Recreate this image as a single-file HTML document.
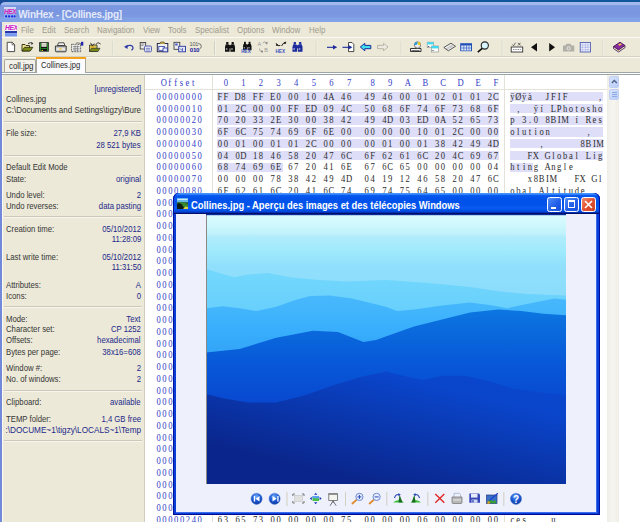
<!DOCTYPE html><html><head><meta charset="utf-8"><style>
*{margin:0;padding:0;box-sizing:border-box}
html,body{width:640px;height:522px;overflow:hidden;background:#fff;position:relative;font-family:"Liberation Sans",sans-serif}
.a{position:absolute}
.mono{font-family:"Liberation Mono",monospace;font-size:9.78px;line-height:11.75px;white-space:pre}
.lp{font-size:9px;line-height:10px;white-space:pre;color:#363636}
.lv{color:#22288a}
.menu{font-size:9px;line-height:10px;color:#9e9b8e;white-space:pre;top:24.9px;transform:scaleX(0.882);transform-origin:0 0}
</style></head><body><div class="a" style="left:0;top:0;width:640px;height:1.6px;background:#10569e"></div><div class="a" style="left:0;top:0;width:8px;height:8px;background:#1a4c9a"></div>
<div class="a" style="left:0;top:1.5px;width:640px;height:21px;background:linear-gradient(#a4baec 0px,#a0b8ec 2.6px,#7b97e0 3.6px,#7a96e0 11.5px,#7c99e1 15px,#82a2e6 16px,#80a2e6 19.8px,#6078d8 20.5px,#6a80d8 21px);border-radius:5px 0 0 0"></div>
<div class="a" style="left:18.2px;top:8.6px;font-size:10px;font-weight:bold;color:#e4eafa;letter-spacing:-0.22px;white-space:pre">WinHex - [Collines.jpg]</div>
<div class="a" style="left:0;top:22px;width:2px;height:500px;background:#7289d9"></div>
<div class="a" style="left:2px;top:22px;width:638px;height:53px;background:#ece9d8"></div>
<div class="a" style="left:2px;top:37px;width:638px;height:1px;background:#fbfaf5"></div>
<div class="a" style="left:2px;top:56px;width:638px;height:1px;background:#d6d2c2"></div>
<div class="a" style="left:2px;top:57px;width:638px;height:1px;background:#fbfaf5"></div>
<div class="a menu" style="left:20.7px">File</div>
<div class="a menu" style="left:41.7px">Edit</div>
<div class="a menu" style="left:63.8px">Search</div>
<div class="a menu" style="left:96.5px">Navigation</div>
<div class="a menu" style="left:143px">View</div>
<div class="a menu" style="left:167.9px">Tools</div>
<div class="a menu" style="left:195.2px">Specialist</div>
<div class="a menu" style="left:236.5px">Options</div>
<div class="a menu" style="left:272px">Window</div>
<div class="a menu" style="left:308.5px">Help</div>
<svg class="a" style="left:0;top:36px" width="640" height="22" viewBox="0 36 640 22"><path d="M7.2,42.3 H12.3 L14.6,44.6 V51.6 H7.2 Z" fill="#fff" stroke="#3a3a3a" stroke-width="0.9"/><path d="M12.1,42.4 V44.8 H14.5" fill="none" stroke="#3a3a3a" stroke-width="0.7"/><path d="M22,44.5 H25 L26,45.5 H29.5 V51 H22 Z" fill="#f3e38f" stroke="#2a2a10" stroke-width="0.9"/><path d="M22,51 L24.5,47.3 H32.8 L30.3,51 Z" fill="#7b8a18" stroke="#2a2a10" stroke-width="0.8"/><path d="M28,43.6 Q30.5,41.8 32.6,43.5 M31.5,42.2 L32.8,43.6 L31.2,44.4" fill="none" stroke="#222" stroke-width="0.9"/><rect x="39.2" y="42.2" width="9.6" height="9.4" fill="#111"/><rect x="39.9" y="42.9" width="1" height="8" fill="#2a9a2a"/><rect x="47.1" y="42.9" width="1" height="8" fill="#2a9a2a"/><rect x="41.4" y="42.9" width="5.2" height="3.9" fill="#e8e8dc"/><rect x="42.2" y="43.6" width="3.6" height="2.5" fill="#cfcfc0"/><rect x="41.3" y="48" width="5.4" height="0.8" fill="#2a9a2a"/><rect x="41.5" y="50" width="1.4" height="1" fill="#d8d020"/><path d="M57.5,45.5 L58.5,42.8 H64 L64.8,45.5 Z" fill="#f4f4f4" stroke="#2a2a2a" stroke-width="0.8"/><path d="M55.4,46 H66.2 V50.8 Q66.2,51.8 65.2,51.8 H56.4 Q55.4,51.8 55.4,50.8 Z" fill="#c8c8c8" stroke="#2a2a2a" stroke-width="0.9"/><rect x="56.5" y="48.4" width="8.5" height="1.3" fill="#fafafa"/><rect x="59.2" y="48.5" width="2.6" height="1" fill="#f0c000"/><rect x="71.6" y="44.3" width="9" height="7.4" fill="#f0f0f0" stroke="#2a2a2a" stroke-width="0.8" stroke-dasharray="1,0.6"/><path d="M73,46.5 H79.5 M73,48.3 H79.5 M73,50 H79.5 M75,45.5 V51 M77.5,45.5 V51" stroke="#6a6a6a" stroke-width="0.6"/><path d="M76,43.2 Q78,42.3 81,43.6" fill="none" stroke="#555" stroke-width="0.7"/><rect x="81" y="41.8" width="2.3" height="3.8" fill="#2424b0"/><path d="M89.5,45 H97 V51.5 H89.5 Z" fill="#d8c850" stroke="#333" stroke-width="0.8"/><path d="M89.5,51.5 L91.5,48.3 H100 L98,51.5 Z" fill="#788a10" stroke="#333" stroke-width="0.7"/><path d="M90.6,42.8 L92.2,46 L94.2,43.5 M95.8,44.5 L98,42.6 L100.6,44" fill="none" stroke="#333" stroke-width="0.9"/><rect x="91.6" y="46" width="2" height="2" fill="#e0a020"/><rect x="112.6" y="41" width="0.8" height="14" fill="#cbc8b8"/><rect x="113.39999999999999" y="41" width="0.6" height="14" fill="#fbfaf6"/><rect x="214.2" y="41" width="0.8" height="14" fill="#cbc8b8"/><rect x="215.0" y="41" width="0.6" height="14" fill="#fbfaf6"/><rect x="315.8" y="41" width="0.8" height="14" fill="#cbc8b8"/><rect x="316.6" y="41" width="0.6" height="14" fill="#fbfaf6"/><rect x="400.8" y="41" width="0.8" height="14" fill="#cbc8b8"/><rect x="401.6" y="41" width="0.6" height="14" fill="#fbfaf6"/><rect x="501.8" y="41" width="0.8" height="14" fill="#cbc8b8"/><rect x="502.6" y="41" width="0.6" height="14" fill="#fbfaf6"/><rect x="602.6" y="41" width="0.8" height="14" fill="#cbc8b8"/><rect x="603.4" y="41" width="0.6" height="14" fill="#fbfaf6"/><path d="M126.5,46.5 Q130,44.3 132.5,46.3 Q134,48.5 131.5,50.3" fill="none" stroke="#2b3aa6" stroke-width="1.1"/><path d="M124,46.8 L127.8,44.8 L127.5,49 Z" fill="#2b3aa6"/><rect x="140.2" y="42.5" width="5.5" height="6.5" fill="#e8e8e8" stroke="#333" stroke-width="0.8"/><path d="M141.3,44 H144.3 M141.3,45.5 H143.3" stroke="#555" stroke-width="0.6"/><rect x="144.5" y="46" width="7" height="5.8" rx="1.2" fill="#dfe2f4" stroke="#4a54a8" stroke-width="0.9"/><path d="M146,48.4 H150 M146,50 H150" stroke="#4a54a8" stroke-width="0.6"/><rect x="157.3" y="43.5" width="10.5" height="8.2" fill="#eeeeee" stroke="#2a2a50" stroke-width="1"/><path d="M159.5,43.8 L160.7,42.1 H164 L165.3,43.8" fill="#f0d040" stroke="#333" stroke-width="0.7"/><rect x="158.8" y="46.5" width="5.5" height="3.8" fill="#ffffff" stroke="#2a3aa0" stroke-width="0.8"/><rect x="163" y="48" width="4.5" height="3.8" fill="#dfe3f5" stroke="#2a3aa0" stroke-width="0.8"/><rect x="174" y="42.3" width="5.8" height="7" fill="#ececec" stroke="#333" stroke-width="0.8"/><rect x="175.2" y="43.5" width="2.5" height="2" fill="#5060c8"/><rect x="178.7" y="46.3" width="6.8" height="5.5" fill="#dfe3f5" stroke="#2a3aa0" stroke-width="0.9"/><path d="M180,48.5 L182,50.5 M182.5,48 V51" stroke="#2a3aa0" stroke-width="0.7"/><text x="189.6" y="46.4" font-family="Liberation Sans" font-size="5.6" fill="#555" letter-spacing="-0.3">101</text><text x="189.8" y="52" font-family="Liberation Sans" font-size="6.2" fill="#2222a0" font-weight="bold" letter-spacing="-0.3">010</text><path d="M198,43.5 Q201.5,43.5 201.3,46.5 Q201,48.5 199.5,49" fill="none" stroke="#444" stroke-width="0.7"/><g transform="translate(225,42) scale(1.0)" fill="#111"><rect x="1.2" y="0" width="2.2" height="2.6"/><rect x="6.6" y="0" width="2.2" height="2.6"/><path d="M0.6,2.5 H4.2 L4.6,5 V9.8 H0 V5.2 Z"/><path d="M5.8,2.5 H9.4 L10,5.2 V9.8 H5.4 V5 Z"/><rect x="4" y="3.2" width="2" height="3.2"/><rect x="0.8" y="6.2" width="1.6" height="1.6" fill="#fff" opacity="0.6"/><rect x="6.2" y="6.2" width="1.6" height="1.6" fill="#fff" opacity="0.6"/></g><g transform="translate(243,41.8) scale(0.85)" fill="#111"><rect x="1.2" y="0" width="2.2" height="2.6"/><rect x="6.6" y="0" width="2.2" height="2.6"/><path d="M0.6,2.5 H4.2 L4.6,5 V9.8 H0 V5.2 Z"/><path d="M5.8,2.5 H9.4 L10,5.2 V9.8 H5.4 V5 Z"/><rect x="4" y="3.2" width="2" height="3.2"/><rect x="0.8" y="6.2" width="1.6" height="1.6" fill="#fff" opacity="0.6"/><rect x="6.2" y="6.2" width="1.6" height="1.6" fill="#fff" opacity="0.6"/></g><text x="241.3" y="52.6" font-family="Liberation Sans" font-size="4.6" font-weight="bold" fill="#4050c0">HEX</text><text x="257.5" y="46.3" font-family="Liberation Sans" font-size="5.5" fill="#9a9a9a">A</text><text x="264.3" y="52.2" font-family="Liberation Sans" font-size="5.5" fill="#9a9a9a">B</text><path d="M262.8,43 L265,41.7 L266.5,44.5 M259.5,48.5 Q259,51.5 262.5,51.8" fill="none" stroke="#9a9a9a" stroke-width="0.8"/><circle cx="266.8" cy="42.8" r="0.9" fill="#777"/><circle cx="262" cy="51.5" r="0.9" fill="#777"/><path d="M276,43.2 Q278,47 280.3,45.5 M281.5,46 Q283.5,42 286.2,42" fill="none" stroke="#222" stroke-width="1"/><circle cx="277" cy="45" r="1.1" fill="#222"/><circle cx="285" cy="43" r="1.1" fill="#222"/><text x="275.5" y="52.6" font-family="Liberation Sans" font-size="4.6" font-weight="bold" fill="#4050c0">HEX</text><g transform="translate(292.5,42) scale(1.0)" fill="#1c2a9c"><rect x="1.2" y="0" width="2.2" height="2.6"/><rect x="6.6" y="0" width="2.2" height="2.6"/><path d="M0.6,2.5 H4.2 L4.6,5 V9.8 H0 V5.2 Z"/><path d="M5.8,2.5 H9.4 L10,5.2 V9.8 H5.4 V5 Z"/><rect x="4" y="3.2" width="2" height="3.2"/><rect x="0.8" y="6.2" width="1.6" height="1.6" fill="#fff" opacity="0.6"/><rect x="6.2" y="6.2" width="1.6" height="1.6" fill="#fff" opacity="0.6"/></g><path d="M327,47.3 H334.5" stroke="#1c2a9c" stroke-width="1.1"/><path d="M333,45 L337.2,47.3 L333,49.6 Z" fill="#1c2a9c"/><path d="M348.5,42.5 H352 L353.8,44.3 V51.6 H348.5 Z" fill="#fff" stroke="#222" stroke-width="0.8"/><path d="M342.5,47.3 H349" stroke="#1c2a9c" stroke-width="1.1"/><path d="M348.5,45 L352.3,47.3 L348.5,49.6 Z" fill="#1c2a9c"/><path d="M360.3,47 L364.8,43.3 V45.4 H370.8 V48.7 H364.8 V50.8 Z" fill="#3ee0f0" stroke="#1c2a9c" stroke-width="1"/><path d="M388,47 L383.5,43.3 V45.4 H377.5 V48.7 H383.5 V50.8 Z" fill="#eceae0" stroke="#b8b6a8" stroke-width="1"/><path d="M410.5,48.5 H421 V51.5 H410.5 Z" fill="#f4f4f4" stroke="#222" stroke-width="0.9"/><rect x="411.5" y="50" width="8" height="0.8" fill="#555"/><circle cx="417.5" cy="45" r="3.2" fill="#e8e8e8" stroke="#555" stroke-width="0.7"/><path d="M417.5,41.8 A3.2,3.2 0 0 1 420.7,45 L417.5,45 Z" fill="#f0c820"/><path d="M414.3,45 A3.2,3.2 0 0 1 417.5,41.8 L417.5,45Z" fill="#30a0e0"/><circle cx="417.5" cy="45" r="0.8" fill="#fff"/><rect x="427.2" y="42.2" width="6.5" height="5.5" fill="#fff" stroke="#888" stroke-width="0.6"/><rect x="427.2" y="42.2" width="6.5" height="2.2" fill="#40d8f0"/><rect x="431.5" y="46" width="7" height="6" fill="#fff" stroke="#888" stroke-width="0.6"/><rect x="431.5" y="46" width="7" height="2.4" fill="#40d8f0"/><rect x="428.2" y="46" width="1" height="1" fill="#333"/><rect x="432.5" y="50" width="1" height="1" fill="#333"/><path d="M443.8,47.5 L451,43.2 L455.5,46.3 L448.3,50.8 Z" fill="#f0f0f0" stroke="#333" stroke-width="0.8"/><path d="M446.5,48.5 L452.5,45 M447.5,49.2 L453.5,45.7" stroke="#666" stroke-width="0.6" stroke-dasharray="0.8,0.6"/><rect x="460.2" y="43.2" width="11.8" height="8" fill="#1e50b8"/><rect x="461.2" y="45.5" width="9.8" height="5" fill="#dfe6f8"/><path d="M463.8,45.5 V50.5 M466.5,45.5 V50.5 M469,45.5 V50.5 M461.2,48 H471" stroke="#1e50b8" stroke-width="0.6"/><circle cx="484.8" cy="45.5" r="3.6" fill="#d8f4fc" stroke="#222" stroke-width="1.1"/><path d="M482.2,48.3 L477.8,52.2" stroke="#111" stroke-width="1.6"/><path d="M512.3,44.5 L513.5,45.8 L515.5,42.7 M518,42.8 L520.5,45.5 M520.5,42.8 L518,45.5" fill="none" stroke="#444" stroke-width="0.8"/><rect x="511.2" y="47" width="11.5" height="5" fill="#fff" stroke="#333" stroke-width="0.9"/><path d="M513,49.5 H521" stroke="#666" stroke-width="0.8" stroke-dasharray="1,0.7"/><path d="M537,43 V51.5 L531,47.25 Z" fill="#111"/><path d="M549.2,43 V51.5 L555,47.25 Z" fill="#111"/><path d="M563,45.5 H565.5 L566.5,43.8 H570.5 L571.5,45.5 H574.3 V51.5 H563 Z" fill="#b0afa8"/><circle cx="568.6" cy="48.3" r="2.1" fill="#e4e2d8"/><circle cx="568.6" cy="48.3" r="1.1" fill="#b0afa8"/><rect x="580.2" y="42.5" width="10.2" height="9.5" fill="#eef0ff" stroke="#4050a8" stroke-width="0.8"/><path d="M582.7,42.5 V52 M585.3,42.5 V52 M587.9,42.5 V52 M580.2,44.9 H590.4 M580.2,47.3 H590.4 M580.2,49.7 H590.4" stroke="#6070c0" stroke-width="0.5" stroke-dasharray="0.7,0.5"/><path d="M613.5,46.5 L620,42.2 L625,45.5 L618.5,50 Z" fill="#8a2aa0" stroke="#3a0c50" stroke-width="0.8"/><path d="M613.5,46.5 V48.5 L618.5,52 L625,47.6 V45.5 L618.5,50 Z" fill="#f0e8c0" stroke="#3a0c50" stroke-width="0.8"/><path d="M618,44.5 L620.5,43.3 L621.8,44.6 L619.3,45.8 Z" fill="#f0d040"/></svg>
<svg class="a" style="left:3.6px;top:7px" width="12" height="14" viewBox="0 0 12 14"><rect x="0" y="0" width="12" height="2.2" fill="#e8eaf4" opacity="0.8"/><rect x="0" y="2.2" width="12" height="4.5" fill="#dcd8f0" opacity="0.6"/><text x="0" y="6.6" font-family="Liberation Sans" font-size="6.6" font-weight="bold" font-style="italic" fill="#d428c0" letter-spacing="-0.5">HEX</text><rect x="0" y="7" width="12" height="4.5" fill="#9ab0f0" opacity="0.7"/><rect x="1" y="8.3" width="2.2" height="2.2" rx="1" fill="#1830e0"/><rect x="4" y="8.3" width="2.2" height="2.2" rx="1" fill="#1830e0"/><rect x="7" y="8.3" width="2.2" height="2.2" rx="1" fill="#1830e0"/><rect x="9.6" y="8.3" width="2" height="2.2" rx="1" fill="#1830e0"/></svg>
<svg class="a" style="left:4.9px;top:24.2px" width="12" height="12.5" viewBox="0 0 12 12.5"><rect x="0" y="0" width="12" height="12.5" fill="#f4f2f8"/><text x="0" y="6.3" font-family="Liberation Sans" font-size="6.8" font-weight="bold" font-style="italic" fill="#d020c8" letter-spacing="-0.5">HEX</text><rect x="0" y="7" width="12" height="2.2" fill="#2838a8"/><rect x="0" y="9.2" width="12" height="3.3" fill="#7898f0"/></svg>
<div class="a" style="left:2px;top:71.6px;width:638px;height:3.6px;background:linear-gradient(#9da5a5 0px,#9da5a5 1px,#fdfdfd 1px,#fdfdfd 2.3px,#9aa4a4 2.3px)"></div>
<div class="a" style="left:3.5px;top:59px;width:32px;height:13px;background:#f3f2ea;border:1px solid #a8a69a;border-bottom:none;border-radius:2px 2px 0 0"></div>
<div class="a" style="left:8.6px;top:60.6px;font-size:9px;line-height:10px;color:#262626;white-space:pre;transform:scaleX(0.87);transform-origin:0 0">coll.jpg</div>
<div class="a" style="left:35.5px;top:57px;width:50px;height:16px;background:#fcfcfe;border:1px solid #a8a69a;border-bottom:none;border-radius:2px 2px 0 0"></div>
<div class="a" style="left:35.5px;top:57px;width:50px;height:2px;background:#f4a21e"></div>
<div class="a" style="left:41.4px;top:60.1px;font-size:9px;line-height:10px;color:#262626;white-space:pre;transform:scaleX(0.84);transform-origin:0 0">Collines.jpg</div>
<div class="a" style="left:2px;top:75px;width:142px;height:447px;background:#ece9d8;border-left:1px solid #fbfaf4"></div>
<div class="a" style="left:144px;top:75px;width:1px;height:447px;background:#d0cdbf"></div>
<div class="a lp lv" style="right:499px;top:83.5px;text-align:right;transform:scaleX(0.847);transform-origin:100% 0">[unregistered]</div>
<div class="a lp" style="left:6px;top:94.45px;transform:scaleX(0.86);transform-origin:0 0">Collines.jpg</div>
<div class="a lp" style="left:6px;top:105.10000000000001px;transform:scaleX(0.888);transform-origin:0 0">C:\Documents and Settings\tigzy\Bure</div>
<div class="a" style="left:4px;top:121.25px;width:138px;height:1px;background:#cdc9b8"></div><div class="a" style="left:4px;top:122.25px;width:138px;height:0.8px;background:#f6f5ee"></div>
<div class="a" style="left:4px;top:154.9px;width:138px;height:1px;background:#cdc9b8"></div><div class="a" style="left:4px;top:155.9px;width:138px;height:0.8px;background:#f6f5ee"></div>
<div class="a" style="left:4px;top:216.1px;width:138px;height:1px;background:#cdc9b8"></div><div class="a" style="left:4px;top:217.1px;width:138px;height:0.8px;background:#f6f5ee"></div>
<div class="a" style="left:4px;top:305.8px;width:138px;height:1px;background:#cdc9b8"></div><div class="a" style="left:4px;top:306.8px;width:138px;height:0.8px;background:#f6f5ee"></div>
<div class="a" style="left:4px;top:389.9px;width:138px;height:1px;background:#cdc9b8"></div><div class="a" style="left:4px;top:390.9px;width:138px;height:0.8px;background:#f6f5ee"></div>
<div class="a" style="left:4px;top:439.5px;width:138px;height:1px;background:#cdc9b8"></div><div class="a" style="left:4px;top:440.5px;width:138px;height:0.8px;background:#f6f5ee"></div>
<div class="a lp" style="left:6px;top:128.39999999999998px;transform:scaleX(0.86);transform-origin:0 0">File size:</div>
<div class="a lp lv" style="right:499px;top:128.39999999999998px;text-align:right;transform:scaleX(0.86);transform-origin:100% 0">27,9 KB</div>
<div class="a lp lv" style="right:499px;top:139.6px;text-align:right;transform:scaleX(0.86);transform-origin:100% 0">28 521 bytes</div>
<div class="a lp" style="left:6px;top:162.0px;transform:scaleX(0.86);transform-origin:0 0">Default Edit Mode</div>
<div class="a lp" style="left:6px;top:173.5px;transform:scaleX(0.86);transform-origin:0 0">State:</div>
<div class="a lp lv" style="right:499px;top:173.5px;text-align:right;transform:scaleX(0.86);transform-origin:100% 0">original</div>
<div class="a lp" style="left:6px;top:189.89999999999998px;transform:scaleX(0.86);transform-origin:0 0">Undo level:</div>
<div class="a lp lv" style="right:499px;top:189.89999999999998px;text-align:right;transform:scaleX(0.86);transform-origin:100% 0">2</div>
<div class="a lp" style="left:6px;top:200.79999999999998px;transform:scaleX(0.86);transform-origin:0 0">Undo reverses:</div>
<div class="a lp lv" style="right:499px;top:200.79999999999998px;text-align:right;transform:scaleX(0.86);transform-origin:100% 0">data pasting</div>
<div class="a lp" style="left:6px;top:223.79999999999998px;transform:scaleX(0.86);transform-origin:0 0">Creation time:</div>
<div class="a lp lv" style="right:499px;top:223.79999999999998px;text-align:right;transform:scaleX(0.86);transform-origin:100% 0">05/10/2012</div>
<div class="a lp lv" style="right:499px;top:234.45px;text-align:right;transform:scaleX(0.86);transform-origin:100% 0">11:28:09</div>
<div class="a lp" style="left:6px;top:251.7px;transform:scaleX(0.86);transform-origin:0 0">Last write time:</div>
<div class="a lp lv" style="right:499px;top:251.7px;text-align:right;transform:scaleX(0.86);transform-origin:100% 0">05/10/2012</div>
<div class="a lp lv" style="right:499px;top:262.3px;text-align:right;transform:scaleX(0.86);transform-origin:100% 0">11:31:50</div>
<div class="a lp" style="left:6px;top:279.59999999999997px;transform:scaleX(0.86);transform-origin:0 0">Attributes:</div>
<div class="a lp lv" style="right:499px;top:279.59999999999997px;text-align:right;transform:scaleX(0.86);transform-origin:100% 0">A</div>
<div class="a lp" style="left:6px;top:290.5px;transform:scaleX(0.86);transform-origin:0 0">Icons:</div>
<div class="a lp lv" style="right:499px;top:290.5px;text-align:right;transform:scaleX(0.86);transform-origin:100% 0">0</div>
<div class="a lp" style="left:6px;top:313.5px;transform:scaleX(0.86);transform-origin:0 0">Mode:</div>
<div class="a lp lv" style="right:499px;top:313.5px;text-align:right;transform:scaleX(0.86);transform-origin:100% 0">Text</div>
<div class="a lp" style="left:6px;top:324.2px;transform:scaleX(0.86);transform-origin:0 0">Character set:</div>
<div class="a lp lv" style="right:499px;top:324.2px;text-align:right;transform:scaleX(0.86);transform-origin:100% 0">CP 1252</div>
<div class="a lp" style="left:6px;top:335.09999999999997px;transform:scaleX(0.86);transform-origin:0 0">Offsets:</div>
<div class="a lp lv" style="right:499px;top:335.09999999999997px;text-align:right;transform:scaleX(0.86);transform-origin:100% 0">hexadecimal</div>
<div class="a lp" style="left:6px;top:346.59999999999997px;transform:scaleX(0.86);transform-origin:0 0">Bytes per page:</div>
<div class="a lp lv" style="right:499px;top:346.59999999999997px;text-align:right;transform:scaleX(0.86);transform-origin:100% 0">38x16=608</div>
<div class="a lp" style="left:6px;top:362.5px;transform:scaleX(0.86);transform-origin:0 0">Window #:</div>
<div class="a lp lv" style="right:499px;top:362.5px;text-align:right;transform:scaleX(0.86);transform-origin:100% 0">2</div>
<div class="a lp" style="left:6px;top:374.3px;transform:scaleX(0.86);transform-origin:0 0">No. of windows:</div>
<div class="a lp lv" style="right:499px;top:374.3px;text-align:right;transform:scaleX(0.86);transform-origin:100% 0">2</div>
<div class="a lp" style="left:6px;top:397.0px;transform:scaleX(0.86);transform-origin:0 0">Clipboard:</div>
<div class="a lp lv" style="right:499px;top:397.0px;text-align:right;transform:scaleX(0.86);transform-origin:100% 0">available</div>
<div class="a lp" style="left:6px;top:413.7px;transform:scaleX(0.86);transform-origin:0 0">TEMP folder:</div>
<div class="a lp lv" style="right:499px;top:413.7px;text-align:right;transform:scaleX(0.86);transform-origin:100% 0">1,4 GB free</div>
<div class="a lp lv" style="right:499px;top:424.59999999999997px;text-align:right;transform:scaleX(0.91);transform-origin:100% 0">:\DOCUME~1\tigzy\LOCALS~1\Temp</div>
<div class="a" style="left:145px;top:89px;width:463px;height:1px;background:#e4e2d8"></div>
<div class="a" style="left:212px;top:75px;width:1px;height:447px;background:#e4e2d8"></div>
<div class="a" style="left:503.5px;top:75px;width:1px;height:447px;background:#e4e2d8"></div>
<div class="a" style="left:217px;top:92.0px;width:282px;height:9.3px;background:#dedef8"></div>
<div class="a" style="left:509.5px;top:92.0px;width:93.8px;height:9.3px;background:#dedef8"></div>
<div class="a" style="left:217px;top:103.75px;width:282px;height:9.3px;background:#dedef8"></div>
<div class="a" style="left:509.5px;top:103.75px;width:93.8px;height:9.3px;background:#dedef8"></div>
<div class="a" style="left:217px;top:115.5px;width:282px;height:9.3px;background:#dedef8"></div>
<div class="a" style="left:509.5px;top:115.5px;width:93.8px;height:9.3px;background:#dedef8"></div>
<div class="a" style="left:217px;top:127.25px;width:282px;height:9.3px;background:#dedef8"></div>
<div class="a" style="left:509.5px;top:127.25px;width:93.8px;height:9.3px;background:#dedef8"></div>
<div class="a" style="left:217px;top:139.0px;width:282px;height:9.3px;background:#dedef8"></div>
<div class="a" style="left:509.5px;top:139.0px;width:93.8px;height:9.3px;background:#dedef8"></div>
<div class="a" style="left:217px;top:150.75px;width:282px;height:9.3px;background:#dedef8"></div>
<div class="a" style="left:509.5px;top:150.75px;width:93.8px;height:9.3px;background:#dedef8"></div>
<div class="a" style="left:217px;top:162.5px;width:65.5px;height:9.3px;background:#dedef8"></div>
<div class="a" style="left:509.5px;top:162.5px;width:23.5px;height:9.3px;background:#dedef8"></div>
<svg class="a" style="left:0;top:0" width="640" height="522" viewBox="0 0 640 522">
<g transform="scale(0.86,1)" font-family="Liberation Serif" font-size="10" text-anchor="middle" fill="#3442c8">
<text y="86.20"><tspan x="190.62 197.45 204.27 211.10 217.92 224.75">Offset</tspan></text>
<text y="86.20"><tspan x="262.56 283.04 303.52 323.99 344.47 364.95 385.42 405.90 433.20 453.68 474.16 494.63 515.11 535.59 556.06 576.54">0123456789ABCDEF</tspan></text>
<text y="100.00"><tspan x="184.46 191.28 198.11 204.94 211.76 218.59 225.41 232.24">00000000</tspan></text>
<text y="111.75"><tspan x="184.46 191.28 198.11 204.94 211.76 218.59 225.41 232.24">00000010</tspan></text>
<text y="123.50"><tspan x="184.46 191.28 198.11 204.94 211.76 218.59 225.41 232.24">00000020</tspan></text>
<text y="135.25"><tspan x="184.46 191.28 198.11 204.94 211.76 218.59 225.41 232.24">00000030</tspan></text>
<text y="147.00"><tspan x="184.46 191.28 198.11 204.94 211.76 218.59 225.41 232.24">00000040</tspan></text>
<text y="158.75"><tspan x="184.46 191.28 198.11 204.94 211.76 218.59 225.41 232.24">00000050</tspan></text>
<text y="170.50"><tspan x="184.46 191.28 198.11 204.94 211.76 218.59 225.41 232.24">00000060</tspan></text>
<text y="182.25"><tspan x="184.46 191.28 198.11 204.94 211.76 218.59 225.41 232.24">00000070</tspan></text>
<text y="194.00"><tspan x="184.46 191.28 198.11 204.94 211.76 218.59 225.41 232.24">00000080</tspan></text>
<text y="205.75"><tspan x="184.46 191.28 198.11 204.94 211.76 218.59 225.41 232.24">00000090</tspan></text>
<text y="217.50"><tspan x="184.46 191.28 198.11 204.94 211.76 218.59 225.41 232.24">000000A0</tspan></text>
<text y="229.25"><tspan x="184.46 191.28 198.11 204.94 211.76 218.59 225.41 232.24">000000B0</tspan></text>
<text y="241.00"><tspan x="184.46 191.28 198.11 204.94 211.76 218.59 225.41 232.24">000000C0</tspan></text>
<text y="252.75"><tspan x="184.46 191.28 198.11 204.94 211.76 218.59 225.41 232.24">000000D0</tspan></text>
<text y="264.50"><tspan x="184.46 191.28 198.11 204.94 211.76 218.59 225.41 232.24">000000E0</tspan></text>
<text y="276.25"><tspan x="184.46 191.28 198.11 204.94 211.76 218.59 225.41 232.24">000000F0</tspan></text>
<text y="288.00"><tspan x="184.46 191.28 198.11 204.94 211.76 218.59 225.41 232.24">00000100</tspan></text>
<text y="299.75"><tspan x="184.46 191.28 198.11 204.94 211.76 218.59 225.41 232.24">00000110</tspan></text>
<text y="311.50"><tspan x="184.46 191.28 198.11 204.94 211.76 218.59 225.41 232.24">00000120</tspan></text>
<text y="323.25"><tspan x="184.46 191.28 198.11 204.94 211.76 218.59 225.41 232.24">00000130</tspan></text>
<text y="335.00"><tspan x="184.46 191.28 198.11 204.94 211.76 218.59 225.41 232.24">00000140</tspan></text>
<text y="346.75"><tspan x="184.46 191.28 198.11 204.94 211.76 218.59 225.41 232.24">00000150</tspan></text>
<text y="358.50"><tspan x="184.46 191.28 198.11 204.94 211.76 218.59 225.41 232.24">00000160</tspan></text>
<text y="370.25"><tspan x="184.46 191.28 198.11 204.94 211.76 218.59 225.41 232.24">00000170</tspan></text>
<text y="382.00"><tspan x="184.46 191.28 198.11 204.94 211.76 218.59 225.41 232.24">00000180</tspan></text>
<text y="393.75"><tspan x="184.46 191.28 198.11 204.94 211.76 218.59 225.41 232.24">00000190</tspan></text>
<text y="405.50"><tspan x="184.46 191.28 198.11 204.94 211.76 218.59 225.41 232.24">000001A0</tspan></text>
<text y="417.25"><tspan x="184.46 191.28 198.11 204.94 211.76 218.59 225.41 232.24">000001B0</tspan></text>
<text y="429.00"><tspan x="184.46 191.28 198.11 204.94 211.76 218.59 225.41 232.24">000001C0</tspan></text>
<text y="440.75"><tspan x="184.46 191.28 198.11 204.94 211.76 218.59 225.41 232.24">000001D0</tspan></text>
<text y="452.50"><tspan x="184.46 191.28 198.11 204.94 211.76 218.59 225.41 232.24">000001E0</tspan></text>
<text y="464.25"><tspan x="184.46 191.28 198.11 204.94 211.76 218.59 225.41 232.24">000001F0</tspan></text>
<text y="476.00"><tspan x="184.46 191.28 198.11 204.94 211.76 218.59 225.41 232.24">00000200</tspan></text>
<text y="487.75"><tspan x="184.46 191.28 198.11 204.94 211.76 218.59 225.41 232.24">00000210</tspan></text>
<text y="499.50"><tspan x="184.46 191.28 198.11 204.94 211.76 218.59 225.41 232.24">00000220</tspan></text>
<text y="511.25"><tspan x="184.46 191.28 198.11 204.94 211.76 218.59 225.41 232.24">00000230</tspan></text>
<text y="523.00"><tspan x="184.46 191.28 198.11 204.94 211.76 218.59 225.41 232.24">00000240</tspan></text>
</g><g transform="scale(0.86,1)" font-family="Liberation Serif" font-size="10" text-anchor="middle" fill="#2c2c2c">
<text y="100.00"><tspan x="255.74 262.56 276.22 283.04 296.69 303.52 317.17 323.99 337.65 344.47 358.12 364.95 378.60 385.42 399.08 405.90 426.38 433.20 446.85 453.68 467.33 474.16 487.81 494.63 508.28 515.11 528.76 535.59 549.24 556.06 569.72 576.54">FFD8FFE000104A46494600010201012C</tspan></text>
<text y="100.00"><tspan x="595.84 602.65 609.45 616.25 636.66 643.46 650.26 657.06 697.88">ÿØÿàJFIF,</tspan></text>
<text y="111.75"><tspan x="255.74 262.56 276.22 283.04 296.69 303.52 317.17 323.99 337.65 344.47 358.12 364.95 378.60 385.42 399.08 405.90 426.38 433.20 446.85 453.68 467.33 474.16 487.81 494.63 508.28 515.11 528.76 535.59 549.24 556.06 569.72 576.54">012C0000FFED094C50686F746F73686F</tspan></text>
<text y="111.75"><tspan x="602.65 623.05 629.85 643.46 650.26 657.06 663.87 670.67 677.47 684.27 691.08 697.88">,ÿíLPhotosho</tspan></text>
<text y="123.50"><tspan x="255.74 262.56 276.22 283.04 296.69 303.52 317.17 323.99 337.65 344.47 358.12 364.95 378.60 385.42 399.08 405.90 426.38 433.20 446.85 453.68 467.33 474.16 487.81 494.63 508.28 515.11 528.76 535.59 549.24 556.06 569.72 576.54">7020332E30003842494D03ED0A526573</tspan></text>
<text y="123.50"><tspan x="595.84 609.45 616.25 623.05 636.66 643.46 650.26 657.06 670.67 684.27 691.08 697.88">p3.08BIMíRes</tspan></text>
<text y="135.25"><tspan x="255.74 262.56 276.22 283.04 296.69 303.52 317.17 323.99 337.65 344.47 358.12 364.95 378.60 385.42 399.08 405.90 426.38 433.20 446.85 453.68 467.33 474.16 487.81 494.63 508.28 515.11 528.76 535.59 549.24 556.06 569.72 576.54">6F6C7574696F6E0000000010012C0000</tspan></text>
<text y="135.25"><tspan x="595.84 602.65 609.45 616.25 623.05 629.85 636.66 684.27">olution,</tspan></text>
<text y="147.00"><tspan x="255.74 262.56 276.22 283.04 296.69 303.52 317.17 323.99 337.65 344.47 358.12 364.95 378.60 385.42 399.08 405.90 426.38 433.20 446.85 453.68 467.33 474.16 487.81 494.63 508.28 515.11 528.76 535.59 549.24 556.06 569.72 576.54">00010001012C0000000100013842494D</tspan></text>
<text y="147.00"><tspan x="629.85 677.47 684.27 691.08 697.88">,8BIM</tspan></text>
<text y="158.75"><tspan x="255.74 262.56 276.22 283.04 296.69 303.52 317.17 323.99 337.65 344.47 358.12 364.95 378.60 385.42 399.08 405.90 426.38 433.20 446.85 453.68 467.33 474.16 487.81 494.63 508.28 515.11 528.76 535.59 549.24 556.06 569.72 576.54">040D18465820476C6F62616C204C6967</tspan></text>
<text y="158.75"><tspan x="616.25 623.05 636.66 643.46 650.26 657.06 663.87 670.67 684.27 691.08 697.88">FXGlobalLig</tspan></text>
<text y="170.50"><tspan x="255.74 262.56 276.22 283.04 296.69 303.52 317.17 323.99 337.65 344.47 358.12 364.95 378.60 385.42 399.08 405.90 426.38 433.20 446.85 453.68 467.33 474.16 487.81 494.63 508.28 515.11 528.76 535.59 549.24 556.06 569.72 576.54">6874696E6720416E676C650000000004</tspan></text>
<text y="170.50"><tspan x="595.84 602.65 609.45 616.25 623.05 636.66 643.46 650.26 657.06 663.87">htingAngle</tspan></text>
<text y="182.25"><tspan x="255.74 262.56 276.22 283.04 296.69 303.52 317.17 323.99 337.65 344.47 358.12 364.95 378.60 385.42 399.08 405.90 426.38 433.20 446.85 453.68 467.33 474.16 487.81 494.63 508.28 515.11 528.76 535.59 549.24 556.06 569.72 576.54">000000783842494D041912465820476C</tspan></text>
<text y="182.25"><tspan x="616.25 623.05 629.85 636.66 643.46 670.67 677.47 691.08 697.88">x8BIMFXGl</tspan></text>
<text y="194.00"><tspan x="255.74 262.56 276.22 283.04 296.69 303.52 317.17 323.99 337.65 344.47 358.12 364.95 378.60 385.42 399.08 405.90 426.38 433.20 446.85 453.68 467.33 474.16 487.81 494.63 508.28 515.11 528.76 535.59 549.24 556.06 569.72 576.54">6F62616C20416C746974756465000000</tspan></text>
<text y="194.00"><tspan x="595.84 602.65 609.45 616.25 629.85 636.66 643.46 650.26 657.06 663.87 670.67 677.47">obalAltitude</tspan></text>
<text y="523.00"><tspan x="255.74 262.56 276.22 283.04 296.69 303.52 317.17 323.99 337.65 344.47 358.12 364.95 378.60 385.42 399.08 405.90 426.38 433.20 446.85 453.68 467.33 474.16 487.81 494.63 508.28 515.11 528.76 535.59 549.24 556.06 569.72 576.54">63657300000000750000000600000000</tspan></text>
<text y="523.00"><tspan x="595.84 602.65 609.45 643.46">cesu</tspan></text>
</g></svg>
<div class="a" style="left:607px;top:75px;width:12.4px;height:447px;background:linear-gradient(90deg,#eeede6,#f6f5f0 50%,#eeede6)"></div>
<div class="a" style="left:608.6px;top:76px;width:10.6px;height:11.6px;background:linear-gradient(135deg,#d8e4fc,#b8ccf6);border:1px solid #c0d0f4;border-radius:2px"></div>
<svg class="a" style="left:608.6px;top:76px" width="11" height="12" viewBox="0 0 11 12"><path d="M2.8,7 L5.3,4.5 L7.8,7" fill="none" stroke="#4d6185" stroke-width="1.3"/></svg>
<div class="a" style="left:608.6px;top:88.6px;width:10.6px;height:11.6px;background:linear-gradient(135deg,#d8e4fc,#b8ccf6);border:1px solid #c0d0f4;border-radius:2px"></div>
<svg class="a" style="left:608.6px;top:88.6px" width="11" height="12" viewBox="0 0 11 12"><path d="M3,3.5 H8 M3,5.5 H8 M3,7.5 H8" stroke="#8aa4e0" stroke-width="0.9"/></svg>
<div class="a" style="left:172.75px;top:192.75px;width:427.25px;height:321.9px;background:#0a3ed6;border-radius:6px 6px 0 0"></div>
<div class="a" style="left:172.75px;top:192.75px;width:427.25px;height:21.5px;background:linear-gradient(#4a96fc 0px,#3a8cfc 1.2px,#0a5af0 2.5px,#0052ea 5px,#0052ea 12px,#0a5cf2 15px,#0050e4 17.5px,#0040d8 18.8px,#0030b0 19.6px,#000a60 20.6px,#000a60 21.5px);border-radius:6px 6px 0 0"></div>
<div class="a" style="left:172.75px;top:192.75px;width:427.25px;height:321.9px;border-radius:6px 6px 0 0;box-shadow:inset 1px 0 0 #0010a0, inset -1px 0 0 #0010a0, inset 0 -1px 0 #000a90"></div>
<div class="a" style="left:175.6px;top:214.25px;width:421.2px;height:298.4px;background:#3a6cf0"></div>
<div class="a" style="left:176.1px;top:214.25px;width:420.2px;height:297.9px;background:#eef0fb"></div>
<div class="a" style="left:546.5px;top:196.8px;width:15px;height:15.2px;border:1px solid #fff;border-radius:2.5px;background:linear-gradient(135deg,#4f8cf8,#1e5ce8 60%,#1850d8);box-shadow:inset 0 0 1px rgba(255,255,255,0.5)"><div class="a" style="left:3px;top:9px;width:5px;height:2px;background:#fff"></div></div>
<div class="a" style="left:563.5px;top:196.8px;width:15px;height:15.2px;border:1px solid #fff;border-radius:2.5px;background:linear-gradient(135deg,#4f8cf8,#1e5ce8 60%,#1850d8);box-shadow:inset 0 0 1px rgba(255,255,255,0.5)"><div class="a" style="left:3px;top:2.5px;width:7.5px;height:8px;border:1px solid #fff;border-top-width:2px"></div></div>
<div class="a" style="left:580.5px;top:196.8px;width:15px;height:15.2px;border:1px solid #fff;border-radius:2.5px;background:linear-gradient(135deg,#f08868,#e05030 50%,#d04020);box-shadow:inset 0 0 1px rgba(255,255,255,0.5)"><svg class="a" style="left:2px;top:2px" width="9" height="9" viewBox="0 0 9 9"><path d="M1,1 L8,8 M8,1 L1,8" stroke="#fff" stroke-width="1.6"/></svg></div>
<div class="a" style="left:191.3px;top:199px;font-size:10.8px;line-height:12px;font-weight:bold;color:#fff;white-space:pre;transform:scaleX(0.868);transform-origin:0 0">Collines.jpg - Aperçu des images et des télécopies Windows</div>
<svg class="a" style="left:206px;top:214px" width="360" height="270" viewBox="0 0 360 270"><defs><linearGradient id="sky" gradientUnits="userSpaceOnUse" x1="0" y1="0" x2="0" y2="100"><stop offset="0" stop-color="#dcfcfe"/><stop offset="0.1" stop-color="#d0f8fd"/><stop offset="0.19" stop-color="#c2f2fc"/><stop offset="0.23" stop-color="#b0ecfc"/><stop offset="0.36" stop-color="#a0eafc"/><stop offset="0.52" stop-color="#90e0fc"/><stop offset="0.75" stop-color="#8cdcfc"/></linearGradient><linearGradient id="far" gradientUnits="userSpaceOnUse" x1="0" y1="55" x2="0" y2="95"><stop offset="0" stop-color="#74d8fc"/><stop offset="1" stop-color="#68d0fc"/></linearGradient><linearGradient id="med" gradientUnits="userSpaceOnUse" x1="0" y1="82" x2="0" y2="135"><stop offset="0" stop-color="#48b8fc"/><stop offset="0.35" stop-color="#40b4fc"/><stop offset="0.65" stop-color="#38aefc"/><stop offset="1" stop-color="#34a6f8"/></linearGradient><linearGradient id="drk" gradientUnits="userSpaceOnUse" x1="0" y1="96" x2="0" y2="190"><stop offset="0" stop-color="#0c76e0"/><stop offset="0.25" stop-color="#0a68dc"/><stop offset="0.57" stop-color="#0858d8"/><stop offset="1" stop-color="#0848d0"/></linearGradient><linearGradient id="dk" gradientUnits="userSpaceOnUse" x1="192.8" y1="160.9" x2="167.2" y2="269.1"><stop offset="0" stop-color="#0a46cc"/><stop offset="1" stop-color="#0a268c"/></linearGradient></defs><rect width="360" height="270" fill="url(#sky)"/><path d="M0,54.8 L8.4,57.6 L28,63.3 L42,60.5 L62,59 L84,63.3 L112.5,66 L140.6,67.5 L180,66 L222,69 L264,73 L292.5,77.3 L320.6,80 L360,81.5 L360,270 L0,270Z" fill="url(#far)"/><path d="M0,94.2 L16.9,92.2 L33.7,94.2 L50.6,97 L70.3,92.8 L90,85.8 L104,82.1 L123.7,81.5 L146,84.4 L168.7,90 L180,92.8 L191,97 L208,95.6 L236,91.4 L264,88.6 L287,91.4 L301,94.2 L320.6,90 L348.7,84.4 L360,85.8 L360,270 L0,270Z" fill="url(#med)"/><path d="M0,138.5 L33.7,135 L70.3,123.7 L107,116.7 L132,118 L157.5,128 L170,126 L191,118.5 L208,112.5 L236,105.5 L264,98.4 L292.5,95.6 L315,97 L337.5,99.8 L360,101.2 L360,270 L0,270Z" fill="url(#drk)"/><path d="M0,180 L16.9,184.2 L42,188.4 L70,188.4 L98.4,181.4 L126.5,171.6 L154.7,163 L180,157.5 L197,161.7 L216.6,166 L236,161.7 L258.7,161.7 L278.4,166 L306.5,174.4 L334.7,178.6 L360,181.4 L360,270 L0,270Z" fill="url(#dk)"/><rect x="0" y="0" width="1" height="270" fill="#8c8a84"/><rect x="0" y="0" width="360" height="1.2" fill="#0c2a98"/></svg>
<svg class="a" style="left:240px;top:486px" width="290" height="24" viewBox="240 486 290 24"><defs><radialGradient id="bl" cx="0.45" cy="0.3" r="0.7"><stop offset="0" stop-color="#7ab0f8"/><stop offset="0.5" stop-color="#1e5ed8"/><stop offset="1" stop-color="#0a36a0"/></radialGradient></defs><circle cx="256.6" cy="498.8" r="5.6" fill="url(#bl)" stroke="#5a86d8" stroke-width="0.5"/><circle cx="274.6" cy="498.8" r="5.6" fill="url(#bl)" stroke="#5a86d8" stroke-width="0.5"/><circle cx="516" cy="498.8" r="5.6" fill="url(#bl)" stroke="#5a86d8" stroke-width="0.5"/><rect x="253.8" y="496" width="1.3" height="5.6" fill="#fff"/><path d="M259.5,496 V501.6 L255.5,498.8 Z" fill="#fff"/><rect x="277.3" y="496" width="1.3" height="5.6" fill="#fff"/><path d="M272.5,496 V501.6 L276.6,498.8 Z" fill="#fff"/><text x="516" y="502.6" text-anchor="middle" font-family="Liberation Sans" font-size="10" font-weight="bold" fill="#fff">?</text><rect x="286.5" y="492" width="0.9" height="14" fill="#cfcbb8"/><rect x="345" y="492" width="0.9" height="14" fill="#cfcbb8"/><rect x="386.4" y="492" width="0.9" height="14" fill="#cfcbb8"/><rect x="427.4" y="492" width="0.9" height="14" fill="#cfcbb8"/><rect x="503.4" y="492" width="0.9" height="14" fill="#cfcbb8"/><rect x="294.5" y="495.3" width="7.8" height="6.2" fill="#e0e0e0" stroke="#bbb" stroke-width="0.5"/><path d="M292.8,496 V494 H294.8 M302,494 H304 V496 M304,501 V503 H302 M294.8,503 H292.8 V501" fill="none" stroke="#777" stroke-width="1"/><rect x="312.5" y="496" width="6.5" height="5" fill="#48c048"/><rect x="312.5" y="496" width="6.5" height="2.3" fill="#60a0f0"/><path d="M315.7,492.8 L314,494.8 H317.4 Z M315.7,504.3 L314,502.3 H317.4 Z M309.8,498.5 L311.8,496.8 V500.2 Z M321.6,498.5 L319.6,496.8 V500.2 Z" fill="#1a3ab8"/><rect x="328.8" y="494" width="8.6" height="6.5" fill="#f4f4f0" stroke="#666" stroke-width="0.8"/><path d="M333.1,500.5 V503 M333.1,501 L330,505.8 M333.1,501 L336.2,505.8" stroke="#555" stroke-width="0.8"/><rect x="328.3" y="493.3" width="9.6" height="1.3" fill="#777"/><path d="M356.79999999999995,499.6 L352.4,503.5" stroke="#e08a30" stroke-width="1.8" stroke-linecap="round"/><circle cx="359.4" cy="496.9" r="3.6" fill="#e8eefc" stroke="#6a8ad8" stroke-width="1"/><rect x="357.4" y="496.4" width="4" height="1" fill="#2a4ab8"/><rect x="358.9" y="494.9" width="1" height="4" fill="#2a4ab8"/><path d="M374.0,499.6 L369.6,503.5" stroke="#e08a30" stroke-width="1.8" stroke-linecap="round"/><circle cx="376.6" cy="496.9" r="3.6" fill="#e8eefc" stroke="#6a8ad8" stroke-width="1"/><rect x="374.6" y="496.4" width="4" height="1" fill="#2a4ab8"/><path d="M393,502.5 H404 L400.5,500 Q396,499.5 393,502.5 Z" fill="#40c040"/><path d="M399.5,494.5 L402.5,502.5 H398.5 Z" fill="#1a6a20"/><path d="M394.5,498 Q395.5,494 399,494.5" fill="none" stroke="#2a4ab8" stroke-width="1.1"/><path d="M398.5,493 L400.8,494.8 L398.3,496.3 Z" fill="#2a4ab8"/><path d="M421,502.5 H410.5 L414,500 Q418.5,499.5 421,502.5 Z" fill="#40c040"/><path d="M414.5,494.5 L411.5,502.5 H415.5 Z" fill="#1a6a20"/><path d="M419.5,498 Q418.5,494 415,494.5" fill="none" stroke="#2a4ab8" stroke-width="1.1"/><path d="M415.5,493 L413.2,494.8 L415.7,496.3 Z" fill="#2a4ab8"/><path d="M435.3,494 L444.3,502.8 M444.3,494 L435.3,502.8" stroke="#e02828" stroke-width="1.4"/><path d="M454,497 V493.3 H459.5 L460.5,494.5 V497" fill="#eef2fc" stroke="#9aa6c8" stroke-width="0.7"/><path d="M452,497 H462 V502.5 Q462,503.5 461,503.5 H453 Q452,503.5 452,502.5 Z" fill="#b8b8b8" stroke="#707070" stroke-width="0.7"/><rect x="453" y="499.5" width="8" height="1" fill="#e8e8e8"/><path d="M469.3,493.6 H479 L480,494.6 V502.8 H469.3 Z" fill="#3848b8"/><rect x="471" y="493.8" width="6.5" height="3.8" fill="#e8ecf8"/><rect x="471.5" y="499.5" width="6" height="3.3" fill="#d0d8f0"/><rect x="472.3" y="500" width="1.3" height="2.5" fill="#3848b8"/><rect x="486.5" y="495" width="10.5" height="8.5" fill="#3a70c8" stroke="#2a3a80" stroke-width="0.7"/><path d="M486.8,503.3 L490,498.8 L493,501.5 L495,500 L496.7,503.3 Z" fill="#38a030"/><path d="M489.5,500.5 L497.8,493.3" stroke="#2040d0" stroke-width="1.3"/><rect x="487.5" y="501.5" width="2.2" height="2.2" fill="#f0a020"/></svg>
<svg class="a" style="left:177px;top:198px" width="11" height="11" viewBox="0 0 11 11"><rect x="0" y="0" width="11" height="11" fill="#2a5a30"/><rect x="0" y="0" width="11" height="4.2" fill="#68b8e8"/><rect x="0.5" y="1" width="10" height="1" fill="#e8f6ff" opacity="0.8"/><path d="M0,11 V5.5 L2.5,3.8 L5,5 L7,4.5 L11,6.5 V11 Z" fill="#3a8a30"/><path d="M0,11 V6 L2,4.8 L4.5,6.2 L6.5,9 L7.5,11 Z" fill="#101c10"/><path d="M6,11 L8.5,8.5 L11,9 V11 Z" fill="#e0d050"/></svg>
</body></html>
